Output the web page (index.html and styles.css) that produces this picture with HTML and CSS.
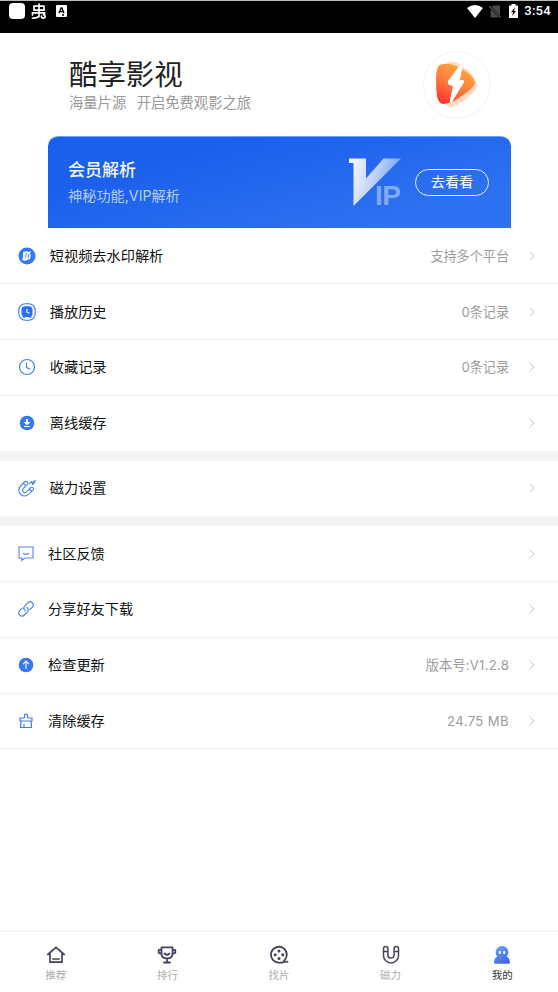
FILE: index.html
```
<!DOCTYPE html>
<html lang="zh-CN">
<head>
<meta charset="utf-8">
<title>酷享影视</title>
<link rel="stylesheet" href="styles.css">
</head>
<body>
<div class="app">
  <div class="status">
    <span class="status-app"></span>
    <svg class="status-bug" width="18" height="18" viewBox="0 0 18 18" fill="none" stroke="#fff" stroke-width="1.700" stroke-linecap="round"><path d="M4 4.200h10v4H4ZM9 2v12.500M2.500 13V10.800h12V13M2.500 16q4 .3 6.500-1.500M13.500 12.500q3.500 2.500 0 3.700q-2.500 0-2-2.200"/></svg>
    <svg class="status-a" width="11" height="12" viewBox="0 0 11 12"><rect width="11" height="12" rx="1" fill="#fff"/><path d="M3 8.300 5.100 3h.8L8 8.300M3.800 6.600h3.400M6 10h2" fill="none" stroke="#000" stroke-width="1.300"/></svg>
    <div class="status-right">
      <svg width="16" height="13" viewBox="0 0 16 13"><path d="M0 3Q8-3 16 3L8 13Z" fill="#fff"/></svg>
      <svg class="sim" width="12" height="13" viewBox="0 0 12 13"><path d="M4 .5h7v12H1.500V3.500Z" fill="#4b4b4b"/><path d="m0 1 11.500 11.500" stroke="#000" stroke-width="2.500"/><path d="m0 1 11.500 11.500" stroke="#5a5a5a" stroke-width="1.200"/></svg>
      <svg class="battery" width="9" height="14" viewBox="0 0 9 14"><path d="M2.500 0h4v1.500H9V14H0V1.500h2.500Z" fill="#fff"/><path d="M6 3.500 2 8.300h2.200L3 12l4-5H4.900Z" fill="#000"/></svg>
      <span class="time">3:54</span>
    </div>
  </div>

  <header class="header">
    <div>
      <h1>酷享影视</h1>
      <p class="slogan"><span>海量片源</span><span>开启免费观影之旅</span></p>
    </div>
    <div class="logo">
      <svg width="42" height="46" viewBox="0 0 42 46">
        <defs><linearGradient id="flame" x1=".65" y1=".15" x2=".2" y2="1"><stop offset="0" stop-color="#ff9f40"/><stop offset=".45" stop-color="#ff7d3d"/><stop offset="1" stop-color="#fb3432"/></linearGradient></defs>
        <path d="M11 3Q15-1 22 2L33 9Q44 20 41 28Q34 38 20 45Q14 48 10 43Q0 30 1 12Q1 6 11 3Z" fill="#ffdcbd"/>
        <path d="M9 3Q18 1 33 12Q40 18 40 22Q39 27 28 34Q18 42 9 43Q2 43 1.500 30Q0 14 3 6Q4 3 9 3Z" fill="url(#flame)"/>
        <path d="M23.500 6q3-3 4 0l-2.500 13h3q2 1 0 4L17 41q-3 1-2-2l3-14-4-1q-2-2-1-4Z" fill="#fff"/>
      </svg>
    </div>
  </header>

  <section class="vip">
    <div class="vip-text"><h2>会员解析</h2><p>神秘功能,VIP解析</p></div>
    <div class="vip-mark">
      <svg width="52" height="49" viewBox="0 0 52 49"><defs><linearGradient id="vee" x1="0" y1=".2" x2="1" y2=".45"><stop stop-color="#f7f9ff"/><stop offset=".5" stop-color="#c0d3fb"/><stop offset="1" stop-color="#6d9af5"/></linearGradient></defs><path d="M0 .5h17v20L34.500.5H52L4.500 48V5H0Z" fill="url(#vee)"/></svg>
      <span class="ip">IP</span>
    </div>
    <a class="go">去看看</a>
  </section>

  <main>
    <div class="group">
      <div class="row"><svg class="icon" viewBox="0 0 18 18"><circle cx="9" cy="9" r="8.500" fill="#3478f6"/><path d="M5 5l4-1 1 1 3-1-1 3 1 1-1 4-3 1-2 1-3-1 1-3Z" fill="#edf3ff"/><path d="M8.500 6 7.500 10.500M11 7l-.8 4" stroke="#3478f6" stroke-width=".8"/></svg><span class="label">短视频去水印解析</span><span class="value">支持多个平台</span><svg class="chevron" viewBox="0 0 6 10"><path d="m.7.700 4.300 4.300L.7 9.300"/></svg></div>
      <div class="row"><svg class="icon" viewBox="0 0 18 18"><rect x=".8" y=".8" width="16.400" height="16.400" rx="6.500" fill="none" stroke="#3478f6" stroke-width="1.100"/><rect x="3.500" y="3.300" width="11" height="10.700" rx="3.500" fill="#2970f5"/><path d="M4.500 13.500h2.500v1.200H4.500zM11 13.500h2.500v1.200H11z" fill="#2970f5"/><path d="M9 6v3.200l2.500 1" fill="none" stroke="#fff" stroke-width="1.100"/></svg><span class="label">播放历史</span><span class="value">0条记录</span><svg class="chevron" viewBox="0 0 6 10"><path d="m.7.700 4.300 4.300L.7 9.300"/></svg></div>
      <div class="row"><svg class="icon" viewBox="0 0 18 18" fill="none" stroke="#4380f5" stroke-width="1.200"><circle cx="9" cy="9" r="7.500"/><path d="M8.500 4.500v5l3.500 1.800"/></svg><span class="label">收藏记录</span><span class="value">0条记录</span><svg class="chevron" viewBox="0 0 6 10"><path d="m.7.700 4.300 4.300L.7 9.300"/></svg></div>
      <div class="row"><svg class="icon" viewBox="0 0 18 18"><circle cx="9" cy="9" r="7.300" fill="#3478f6"/><path d="M8 5h2v3h2.500L9 11.300 5.500 8H8Z" fill="#fff"/><path d="M6 12.500h6" stroke="#fff"/></svg><span class="label">离线缓存</span><svg class="chevron" viewBox="0 0 6 10"><path d="m.7.700 4.300 4.300L.7 9.300"/></svg></div>
    </div>
    <div class="group">
      <div class="row"><svg class="icon" viewBox="0 0 18 18" fill="none" stroke="#4b86f5" stroke-width="1.100" stroke-linejoin="round"><path d="M7 2.500 2.500 7A5.700 5.700 0 0 0 10.800 15.200L15.300 10.700Q16 9.500 15 8.700T12.800 8.500L8.500 12.800A2.200 2.200 0 0 1 5.200 9.600L9.500 5.300Q10.300 4 9.300 3T7 2.500ZM5.500 4.500l2 2M11.300 10l2 2M17.500 1l-3.300 3.300-.5-1.800L11.200 5M17 3l-3 3"/></svg><span class="label">磁力设置</span><svg class="chevron" viewBox="0 0 6 10"><path d="m.7.700 4.300 4.300L.7 9.300"/></svg></div>
    </div>
    <div class="group group-b">
      <div class="row"><svg class="icon" viewBox="0 0 18 18" fill="none" stroke="#5088f5" stroke-width="1.100"><path d="M2 2h14v11H7.500L4.800 15.500V13H2ZM6 8.300q3 2.200 6 0"/></svg><span class="label">社区反馈</span><svg class="chevron" viewBox="0 0 6 10"><path d="m.7.700 4.300 4.300L.7 9.300"/></svg></div>
      <div class="row"><svg class="icon" viewBox="0 0 18 18" fill="none" stroke="#5088f5" stroke-width="1.200" stroke-linecap="round"><path d="M8.300 10.700A3 3 0 0 1 7.600 6.100L10.900 2.700A3.150 3.150 0 0 1 15.400 7.100L12.800 9.700M9.700 7.200A3 3 0 0 1 10.400 11.800L7.100 15.200A3.150 3.150 0 0 1 2.600 10.800L5.200 8.200"/></svg><span class="label">分享好友下载</span><svg class="chevron" viewBox="0 0 6 10"><path d="m.7.700 4.300 4.300L.7 9.300"/></svg></div>
      <div class="row"><svg class="icon" viewBox="0 0 18 18"><circle cx="9" cy="9" r="7.300" fill="#3478f6"/><path d="M9 13V5.300M6 8.100l3-3 3 3" fill="none" stroke="#fff" stroke-width="1.100"/></svg><span class="label">检查更新</span><span class="value version">版本号:V1.2.8</span><svg class="chevron" viewBox="0 0 6 10"><path d="m.7.700 4.300 4.300L.7 9.300"/></svg></div>
      <div class="row"><svg class="icon" viewBox="0 0 18 18" fill="none" stroke="#3f7df5" stroke-width="1.200"><path d="M7.500 6V3q0-1 1.500-1t1.500 1v3M7.500 6H3v3h12V6h-4.500M4 9l-.5 6.500h11L14 9M7 15.500V12"/></svg><span class="label">清除缓存</span><span class="value size">24.75 MB</span><svg class="chevron" viewBox="0 0 6 10"><path d="m.7.700 4.300 4.300L.7 9.300"/></svg></div>
    </div>
  </main>

  <nav class="tabs">
    <a class="tab"><svg viewBox="0 0 20 20" fill="none" stroke="#43435c" stroke-width="1.700" stroke-linejoin="round" stroke-linecap="round"><path d="M4 9v8.200h12V9M1.800 9.500 10 2.300l8.200 7.200M7 14h6"/></svg><span>推荐</span></a>
    <a class="tab"><svg viewBox="0 0 20 20" fill="none" stroke="#43435c" stroke-width="1.800" stroke-linejoin="round" stroke-linecap="round"><path d="M4.500 2.300h11V8.500q0 5-5.500 5T4.500 8.500ZM4.500 4.800H1.700v3l2.800 1M15.500 4.800h2.800v3l-2.800 1M10 13.500v3.800M7 17.500h6M7.500 8.500q2.500 2.500 5 0"/></svg><span>排行</span></a>
    <a class="tab"><svg viewBox="0 0 20 20" fill="none" stroke="#43435c" stroke-width="1.800" stroke-linecap="round"><path d="M15 15.700A7.900 7.900 0 1 0 10 17.600H13Q15 16.700 18.500 16.700"/><g fill="#43435c" stroke="none"><circle cx="10" cy="6" r="1.500"/><circle cx="10" cy="13.500" r="1.500"/><circle cx="6.200" cy="9.800" r="1.500"/><circle cx="13.800" cy="9.800" r="1.500"/></g></svg><span>找片</span></a>
    <a class="tab"><svg viewBox="0 0 20 20" fill="none" stroke="#43435c" stroke-width="1.500" stroke-linejoin="round"><path d="M2.500 3.500q0-2 2.200-2t2.200 2V10a3.100 3.100 0 0 0 6.200 0V3.500q0-2 2.200-2t2.200 2V10.500a7.500 7.500 0 0 1-15 0ZM2.500 6.500h4.400M13.100 6.500h4.400"/></svg><span>磁力</span></a>
    <a class="tab active"><svg viewBox="0 0 20 20"><defs><linearGradient id="me" x1=".2" y1="0" x2=".8" y2="1"><stop stop-color="#65a1ff"/><stop offset="1" stop-color="#4263de"/></linearGradient></defs><path d="M10 1a6.300 6.300 0 0 1 4.700 10.500Q18 13 18 17.500q0 1.300-1.500 1.300h-13Q2 18.800 2 17.500q0-4.500 3.300-6A6.300 6.300 0 0 1 10 1Z" fill="url(#me)"/><rect x="6.800" y="6" width="2" height="3" rx=".8" fill="#fff"/><rect x="11.200" y="6" width="2" height="3" rx=".8" fill="#fff"/></svg><span>我的</span></a>
  </nav>
</div>
</body>
</html>
```
FILE: styles.css
```
* { box-sizing: border-box; }
body { margin: 0; background: #fff; font-family: Roboto, "Noto Sans CJK SC", sans-serif; }
h1, h2, p { margin: 0; font-weight: 400; }
svg { display: block; flex: none; }
.app { width: 558px; height: 992px; display: flex; flex-direction: column; overflow: hidden; }

.status { height: 33px; flex: none; background: #000; border-top: 1px solid #b9bdbb; display: flex; align-items: flex-start; padding: 0 7px 0 9px; }
.status-app { width: 16px; height: 16px; margin-top: 2px; border-radius: 4px; background: #fff; }
.status-bug { margin: 1px 0 0 5px; }
.status-a { margin: 4px 0 0 8px; }
.status-right { margin-left: auto; display: flex; align-items: center; height: 20px; }
.sim { margin-left: 6px; }
.battery { margin-left: 8px; }
.time { margin-left: 6px; color: #fff; font-size: 13px; line-height: 22px; font-weight: 500; letter-spacing: .3px; }

.header { height: 103px; flex: none; display: flex; justify-content: space-between; padding: 18px 67px 0 69px; }
.header h1 { margin-top: 7px; font-size: 28.400px; line-height: 35px; color: #222; }
.slogan { display: flex; gap: 10.500px; font-size: 14.300px; line-height: 20px; color: #999; }
.logo { width: 68px; height: 68px; border: 1px solid #f3f3f3; border-radius: 50%; display: flex; align-items: center; justify-content: center; padding-right: 2px; padding-bottom: 2px; }

.vip { height: 92px; flex: none; margin: 0 47px 0 48px; padding: 0 22px 0 20px; border-radius: 10px 10px 0 0; border-top: 1px solid #72a0f8; background: linear-gradient(165deg, #1b60ed 25%, #2f72f1 85%); display: flex; }
.vip h2 { margin-top: 21px; font-size: 17px; line-height: 24px; font-weight: 500; color: #f3f7ff; }
.vip p { margin-top: 4px; font: 14.200px/20px Inter, "Noto Sans CJK SC", sans-serif; color: #b4cdfa; }
.vip-mark { position: relative; width: 52px; margin: 21px 14px 0 auto; }
.ip { position: absolute; left: 26px; top: 22px; font: 700 28px/32px "Liberation Sans", sans-serif; color: #80a9f6; letter-spacing: -.5px; }
.go { width: 74px; height: 27px; margin-top: 32px; border: 1px solid #e8f0ff; border-radius: 14px; color: #fff; font-size: 14.200px; line-height: 25px; text-align: center; }

main { padding-top: .5px; }
.group + .group { border-top: 9px solid #f3f3f3; padding-top: .400px; }
.row { height: 55.800px; display: flex; align-items: center; padding: 0 23px 0 18px; border-bottom: 1px solid #efefef; }
.group:not(:last-child) .row:last-child { border-bottom-color: #f3f3f3; }
.icon { width: 18px; height: 18px; }
.label { margin-left: 13.800px; font-size: 14.200px; line-height: 20px; color: #111; }
.value { margin-left: auto; font: 13.100px/20px Inter, "Noto Sans CJK SC", sans-serif; color: #9c9c9c; }
.value.version { letter-spacing: .250px; }
.value.size { letter-spacing: .400px; }
.chevron { width: 6px; height: 10px; margin-left: auto; fill: none; stroke: #c5c5c5; stroke-width: 1; }
.value + .chevron { margin-left: 20px; }
.group-b .row { padding-left: 17px; }
.group-b .label { margin-left: 13px; }

.tabs { margin-top: auto; height: 61px; flex: none; border-top: 1px solid #f3f3f3; display: grid; grid-template-columns: repeat(5, 1fr); }
.tab { display: flex; flex-direction: column; align-items: center; padding-top: 13px; font-size: 10.500px; line-height: 14px; color: #adadad; }
.tab svg { width: 20px; height: 20px; margin-bottom: 4px; }
.tab.active { color: #333; }
```
